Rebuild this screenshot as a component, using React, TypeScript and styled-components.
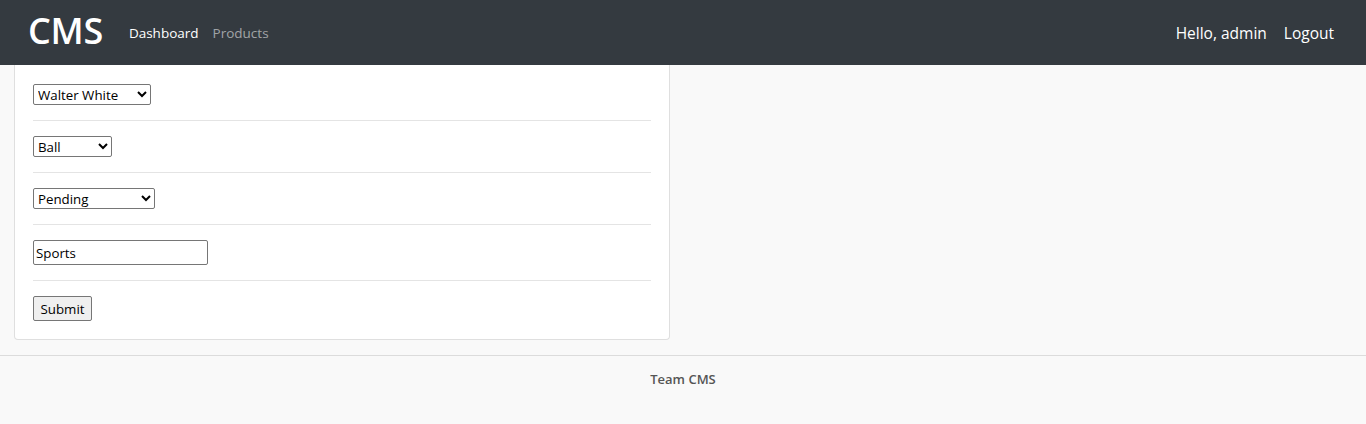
import React from "react";
import styled, { createGlobalStyle } from "styled-components";

const Global = createGlobalStyle`
  html, body { margin: 0; padding: 0; background: #f9f9f9; }
  body { font-family: "Open Sans", "Noto Sans", sans-serif; }
`;

const Nav = styled.nav`
  height: 65px;
  background: #343a40;
  display: flex;
  align-items: center;
  padding: 0 32px 0 28px;
  box-sizing: border-box;
`;

const Brand = styled.a`
  color: #fff;
  font-size: 36px;
  font-weight: 600;
  letter-spacing: -0.3px;
  margin-right: 26px;
  text-decoration: none;
  line-height: 1;
  padding-bottom: 4px;
`;

const NavLink = styled.a<{ $active?: boolean }>`
  color: ${(p) => (p.$active ? "#fff" : "rgba(255,255,255,0.55)")};
  font-size: 13.5px;
  margin-right: 14px;
  text-decoration: none;
`;

const Spacer = styled.div`
  flex: 1;
`;

const RightText = styled.span`
  color: #fff;
  font-size: 15.5px;
  margin-left: 17px;
`;

const Main = styled.main`
  padding: 0 14px 15px;
`;

const Card = styled.form`
  width: 656px;
  box-sizing: border-box;
  background: #fff;
  border: 1px solid #dfdfdf;
  border-top: none;
  border-radius: 0 0 4px 4px;
  padding: 4px 18px 18px;
`;

const Row = styled.div<{ $last?: boolean }>`
  padding: 15px 0;
  border-bottom: ${(p) => (p.$last ? "none" : "1px solid #e4e4e4")};
  display: flex;
  ${(p) => (p.$last ? "padding-bottom: 0;" : "")}
`;

const Select = styled.select<{ $w: number }>`
  width: ${(p) => p.$w}px;
  height: 21px;
  box-sizing: border-box;
  font-family: "Open Sans", sans-serif;
  font-size: 13.3px;
  color: #000;
  background: #fff;
  border: 1px solid #767676;
  border-radius: 2px;
  padding: 0;
  margin: 0;
`;

const Input = styled.input`
  width: 175px;
  height: 25px;
  box-sizing: border-box;
  font-family: "Open Sans", sans-serif;
  font-size: 13.3px;
  border: 1px solid #767676;
  border-radius: 2px;
  padding: 0 2px;
  margin: 0;
`;

const Button = styled.button`
  width: 59px;
  height: 25px;
  box-sizing: border-box;
  font-family: "Open Sans", sans-serif;
  font-size: 13.3px;
  background: #efefef;
  border: 1px solid #767676;
  border-radius: 2px;
  color: #000;
  padding: 0;
  margin: 0;
`;

const Footer = styled.footer`
  border-top: 1px solid #dcdcdc;
  height: 68px;
  display: flex;
  justify-content: center;
  padding-top: 14px;
  box-sizing: border-box;
  color: #555;
  font-size: 13px;
  font-weight: 600;
`;

export default function App() {
  return (
    <>
      <Global />
      <Nav>
        <Brand href="#">CMS</Brand>
        <NavLink $active href="#">Dashboard</NavLink>
        <NavLink href="#">Products</NavLink>
        <Spacer />
        <RightText>Hello, admin</RightText>
        <RightText>Logout</RightText>
      </Nav>
      <Main>
        <Card onSubmit={(e) => e.preventDefault()}>
          <Row>
            <Select $w={118} defaultValue="Walter White">
              <option>Walter White</option>
              <option>Jesse Pinkman</option>
            </Select>
          </Row>
          <Row>
            <Select $w={79} defaultValue="Ball">
              <option>Ball</option>
              <option>Bat</option>
            </Select>
          </Row>
          <Row>
            <Select $w={122} defaultValue="Pending">
              <option>Pending</option>
              <option>Completed</option>
            </Select>
          </Row>
          <Row>
            <Input defaultValue="Sports" />
          </Row>
          <Row $last>
            <Button type="submit">Submit</Button>
          </Row>
        </Card>
      </Main>
      <Footer>Team CMS</Footer>
    </>
  );
}
